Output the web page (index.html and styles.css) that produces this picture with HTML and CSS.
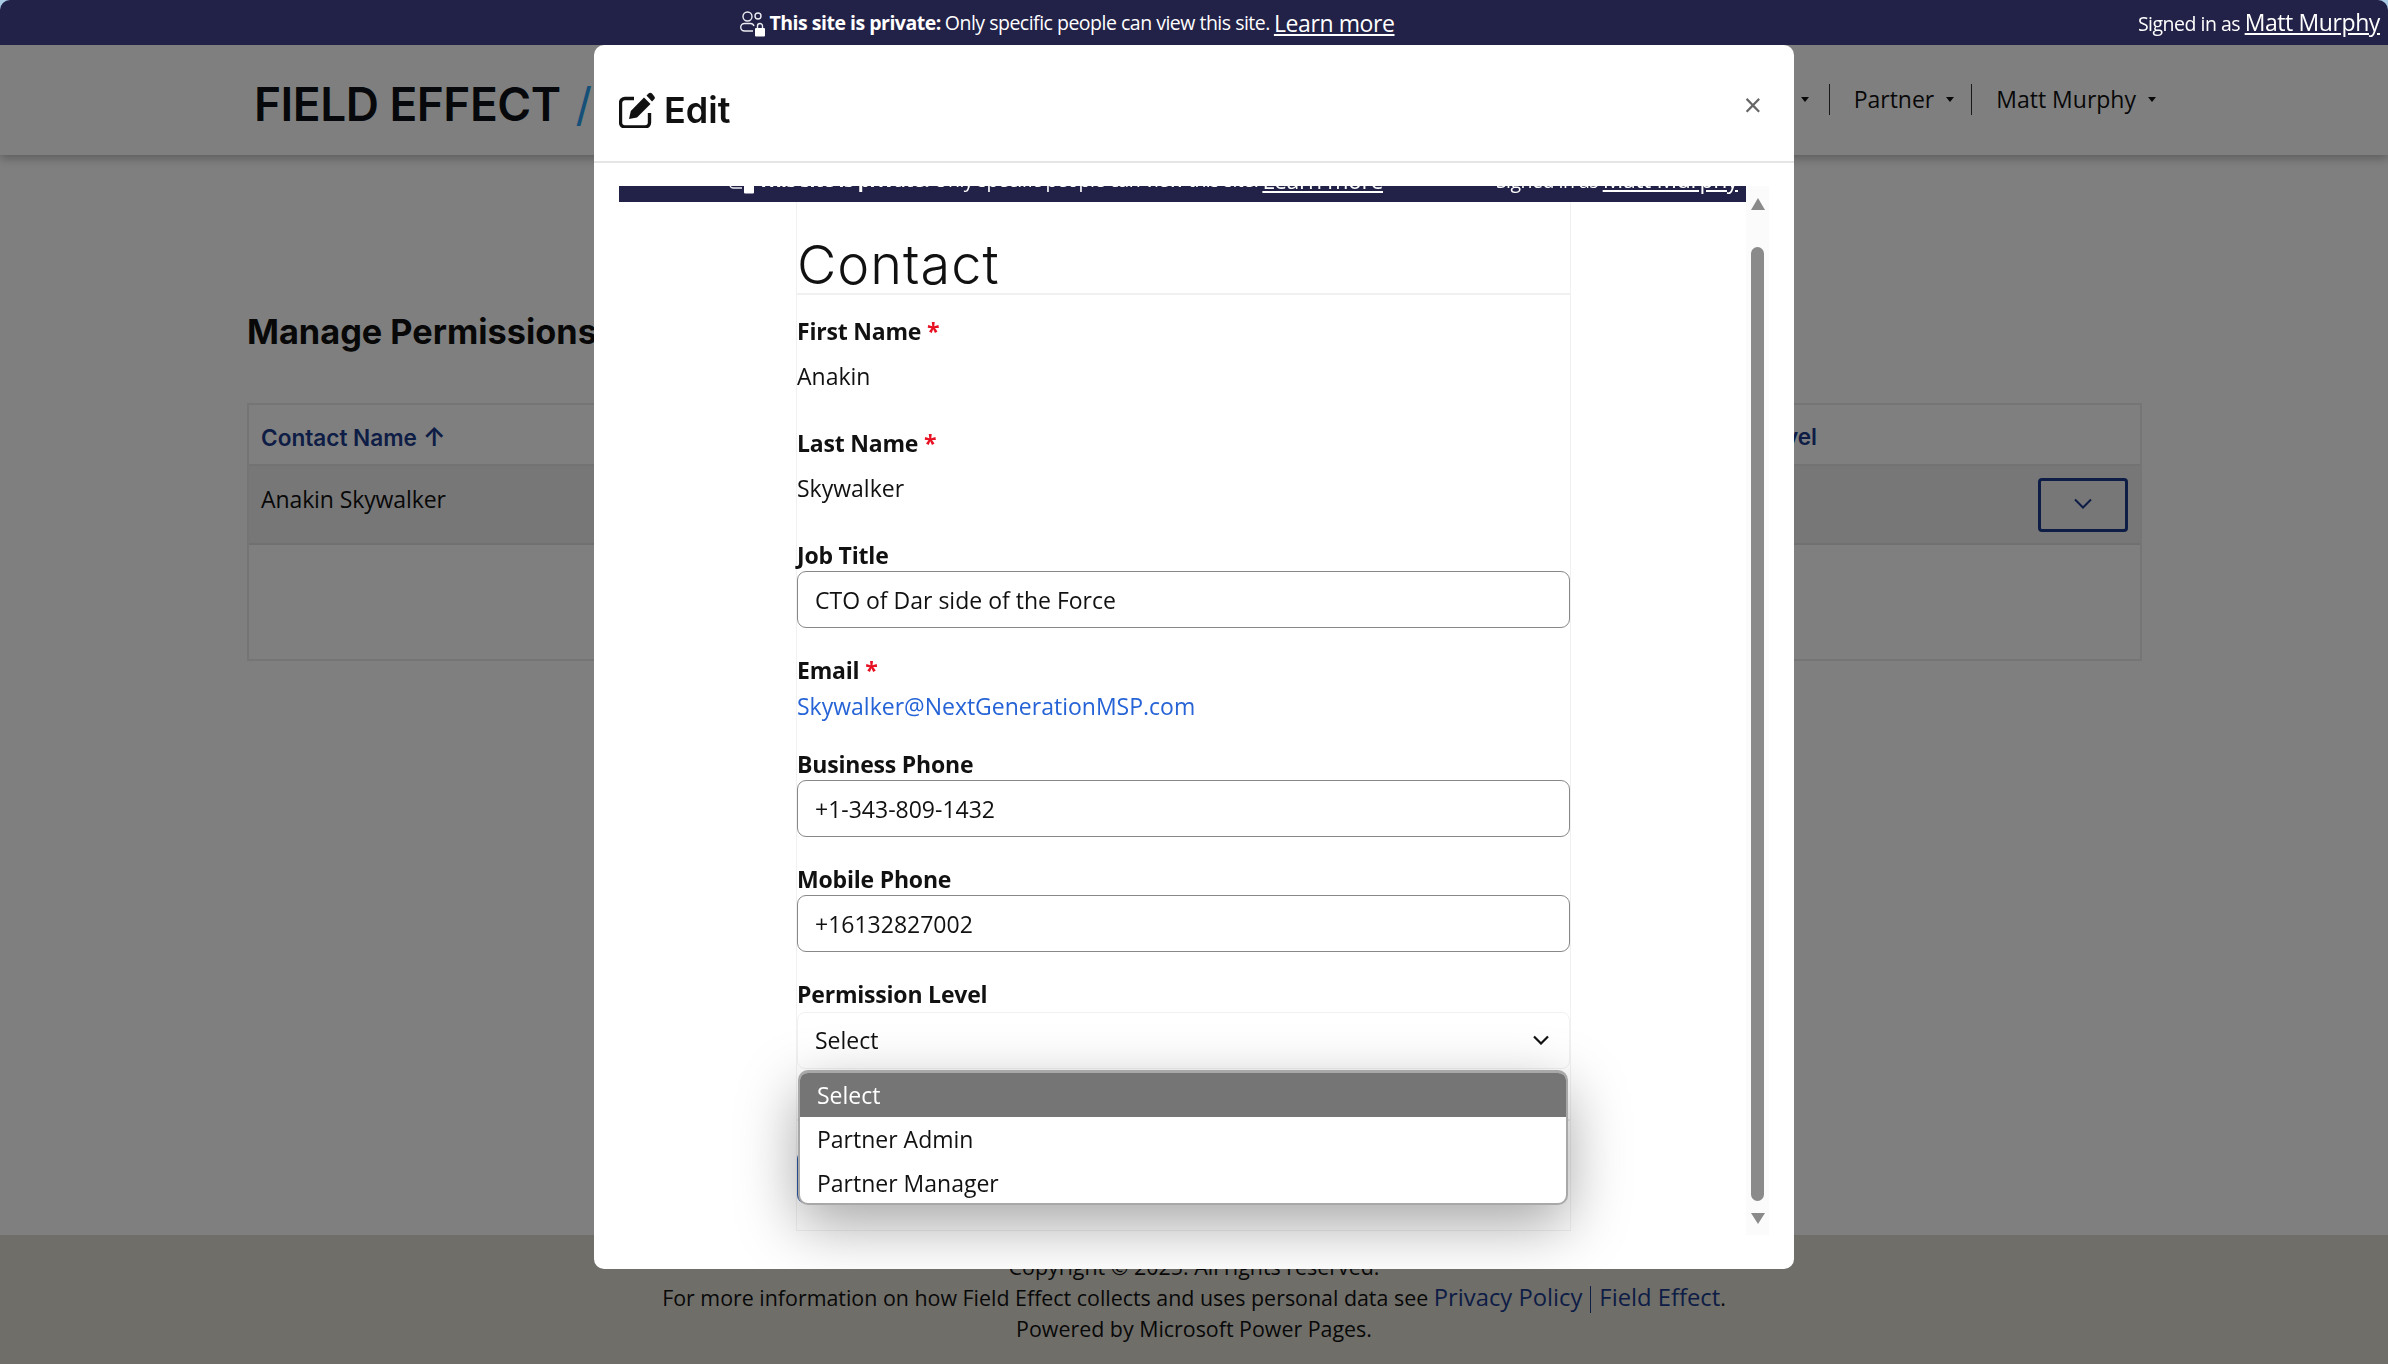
FILE: index.html
```html
<!DOCTYPE html>
<html lang="en">
<head>
    <meta charset="UTF-8">
    <meta name="viewport" content="width=device-width, initial-scale=1.0">
    <title>Manage Permissions</title>
    <link rel="stylesheet" href="styles.css">
</head>
<body>

<!-- Private site banner -->
<div class="site-banner">
    <div class="banner-note">
        <svg class="banner-icon" viewBox="0 0 26 28" fill="none" stroke="#ececf2" stroke-width="1.400">
            <circle cx="8.500" cy="7.500" r="4.500"/>
            <circle cx="19" cy="7" r="3"/>
            <path d="M14 22H5.500a3.700 3.700 0 0 1 0-7.500h6a3.700 3.700 0 0 1 3.500 2.500"/>
            <rect x="16" y="19" width="10" height="8.500" rx="1" fill="#fff" stroke="none"/>
            <path d="M18.500 19v-2a2.500 2.500 0 0 1 5 0v2"/>
        </svg>
        <strong>This site is private:</strong>
        <span>Only specific people can view this site.</span>
        <a href="#" class="banner-link">Learn more</a>
    </div>
    <div class="banner-user">Signed in as <a href="#" class="banner-link">Matt Murphy</a></div>
</div>

<div class="page">
    <!-- Site header -->
    <div class="site-header">
        <div class="logo">FIELD EFFECT <span class="logo-slash">/</span></div>
        <div class="nav">
            <div class="nav-item">Account <i class="caret"></i></div>
            <div class="nav-item nav-partner">Partner <i class="caret"></i></div>
            <div class="nav-item">Matt Murphy <i class="caret"></i></div>
        </div>
    </div>

    <div class="content">
        <h2 class="page-title">Manage Permissions</h2>
        <div class="list">
            <div class="list-row list-head">
                <div>Contact Name <span class="sort-arrow">&#8593;</span></div>
                <div class="list-head-level">Permission Level</div>
            </div>
            <div class="list-row list-item">
                <div class="list-name">Anakin Skywalker</div>
                <button class="row-button">
                    <svg viewBox="0 0 18 12" width="18" height="12" fill="none" stroke="#1a3a8a" stroke-width="2"><path d="M1 1.500l8 8 8-8"/></svg>
                </button>
            </div>
        </div>
    </div>

    <!-- Footer -->
    <div class="site-footer">
        <div>Copyright &copy; 2025. All rights reserved.</div>
        <div>For more information on how Field Effect collects and uses personal data see <a href="#">Privacy Policy</a><span class="footer-bar"></span><a href="#">Field Effect</a>.</div>
        <div>Powered by Microsoft Power Pages.</div>
    </div>
</div>

<!-- Edit modal -->
<div class="overlay">
    <div class="modal">
        <div class="modal-head">
            <div class="modal-title">
                <svg class="edit-icon" viewBox="0 0 36 36" fill="none">
                    <path d="M15 6.500H6a4.500 4.500 0 0 0-4.500 4.500v19.500a4.500 4.500 0 0 0 4.500 4.500h20a4.500 4.500 0 0 0 4.500-4.500V21" stroke="#111" stroke-width="3.400"/>
                    <path d="M10 27l1.800-8L25 5.500l6.500 6.500L18 25.500z" fill="#111"/>
                    <path d="M27.500 3.500l2-2a2.500 2.500 0 0 1 3.500 0l2 2.500a2.500 2.500 0 0 1 0 3.500l-2 2z" fill="#111"/>
                </svg>
                Edit
            </div>
            <div class="modal-close">&times;</div>
        </div>
        <div class="modal-body">
            <div class="frame">
                <div class="frame-banner">
                    <div class="site-banner inner-banner">
                        <div class="banner-note">
                            <svg class="banner-icon" viewBox="0 0 26 28" fill="none" stroke="#ececf2" stroke-width="1.400">
                                <path d="M14 22H5.500a3.700 3.700 0 0 1 0-7.500h6a3.700 3.700 0 0 1 3.500 2.500"/>
                                <rect x="16" y="19" width="10" height="8.500" rx="1" fill="#fff" stroke="none"/>
                            </svg>
                            <strong>This site is private:</strong>
                            <span>Only specific people can view this site.</span>
                            <a href="#" class="banner-link">Learn more</a>
                        </div>
                        <div class="banner-user">Signed in as <a href="#" class="banner-link">Matt Murphy</a></div>
                    </div>
                </div>
                <div class="form-box">
                    <h1 class="form-title">Contact</h1>

                    <div class="field">
                        <div class="field-label">First Name <span class="required">*</span></div>
                        <div class="field-value">Anakin</div>
                    </div>
                    <div class="field">
                        <div class="field-label">Last Name <span class="required">*</span></div>
                        <div class="field-value">Skywalker</div>
                    </div>
                    <div class="field">
                        <div class="field-label">Job Title</div>
                        <input class="field-input" type="text" value="CTO of Dar side of the Force">
                    </div>
                    <div class="field">
                        <div class="field-label">Email <span class="required">*</span></div>
                        <a href="#" class="field-link">Skywalker@NextGenerationMSP.com</a>
                    </div>
                    <div class="field">
                        <div class="field-label">Business Phone</div>
                        <input class="field-input" type="text" value="+1-343-809-1432">
                    </div>
                    <div class="field">
                        <div class="field-label">Mobile Phone</div>
                        <input class="field-input" type="text" value="+16132827002">
                    </div>
                    <div class="field">
                        <div class="field-label">Permission Level</div>
                        <div class="select-box">
                            <span>Select</span>
                            <svg viewBox="0 0 16 10" width="16" height="10" fill="none" stroke="#111" stroke-width="2.200"><path d="M1 1.500l7 7 7-7"/></svg>
                            <div class="select-menu">
                                <div class="select-option selected">Select</div>
                                <div class="select-option">Partner Admin</div>
                                <div class="select-option">Partner Manager</div>
                            </div>
                        </div>
                    </div>

                    <div class="form-actions">
                        <button class="submit-button">Submit</button>
                    </div>
                </div>
            </div>

            <div class="scroll-track">
                <div class="scroll-up"></div>
                <div class="scroll-thumb"></div>
                <div class="scroll-down"></div>
            </div>
        </div>
    </div>
</div>

</body>
</html>
```

FILE: styles.css
```css
* {
    box-sizing: border-box;
}

html {
    background-color: #a9cbe3;
}

body {
    margin: 0;
    height: 1364px;
    overflow: hidden;
    font-family: "Open Sans", "Noto Sans", sans-serif;
    font-size: 23px;
    color: #111;
}

a {
    color: #1a3a8a;
    text-decoration: none;
}

/* Private site banner */
.site-banner {
    position: relative;
    z-index: 10;
    display: flex;
    justify-content: center;
    align-items: center;
    height: 45px;
    padding: 0 254px 0 0;
    background-color: #222147;
    color: #fff;
    font-size: 19.500px;
    letter-spacing: -0.5px;
    border-radius: 10px 10px 0 0;
}

.banner-note {
    display: flex;
    align-items: center;
    gap: 4px;
}

.banner-icon {
    width: 26px;
    height: 28px;
}

.banner-link {
    color: #fff;
    font-size: 23px;
    letter-spacing: -0.4px;
    text-decoration: underline;
}

.banner-user {
    position: absolute;
    right: 8px;
    top: 0;
    line-height: 45px;
}

.page {
    display: flex;
    flex-direction: column;
    height: 1319px;
    background-color: #fff;
}

/* Site header */
.site-header {
    display: flex;
    justify-content: space-between;
    align-items: center;
    height: 110px;
    padding: 0 232px 0 254px;
    box-shadow: 0 3px 10px rgba(0, 0, 0, 0.3);
}

.logo {
    margin-top: 8px;
    font-family: Inter, sans-serif;
    font-size: 46px;
    font-weight: 600;
    letter-spacing: -0.5px;
    color: #0d1117;
}

.logo-slash {
    font-weight: 400;
    color: #2aa0f0;
    margin-left: 4px;
}

.nav {
    display: flex;
    align-items: center;
    margin-top: -2px;
}

.nav-item {
    display: flex;
    align-items: center;
    gap: 12px;
    height: 31px;
    padding: 0 20px 0 24px;
    border-left: 1px solid #333;
}

.nav-item:first-child {
    border-left: none;
}

.nav-item:last-child {
    padding-right: 0;
}

.nav-partner {
    padding-right: 17px;
}

.caret {
    width: 0;
    height: 0;
    border-left: 4px solid transparent;
    border-right: 4px solid transparent;
    border-top: 5px solid #111;
}

/* Table behind the modal */
.content {
    flex: 1;
    padding: 0 246px 0 247px;
}

.page-title {
    margin: 155px 0 49px;
    font-family: Inter, sans-serif;
    font-size: 34.300px;
    font-weight: 700;
    line-height: 44px;
}

.list {
    height: 258px;
    border: 2px solid #ebebeb;
}

.list-row {
    display: flex;
    justify-content: space-between;
    padding: 0 12px;
}

.list-head {
    align-items: center;
    height: 61px;
    padding-top: 3px;
    border-bottom: 2px solid #e6e6e6;
    font-family: Inter, sans-serif;
    font-size: 22.600px;
    font-weight: 600;
    color: #1a3a8a;
}

.sort-arrow {
    font-size: 26px;
}

.list-head-level {
    padding-right: 311px;
}

.list-item {
    height: 79px;
    background-color: #eee;
    border-bottom: 2px solid #e0e0e0;
}

.list-name {
    padding-top: 17px;
    letter-spacing: -0.1px;
}

.row-button {
    width: 90px;
    height: 54px;
    margin-top: 12px;
    background: none;
    border: 3px solid #1a3a8a;
    border-radius: 4px;
}

/* Footer */
.site-footer {
    height: 129px;
    padding-top: 16px;
    background-color: #dfddd3;
    text-align: center;
    font-size: 21.400px;
    line-height: 31px;
}

.site-footer a {
    font-size: 23.800px;
}

.footer-bar {
    display: inline-block;
    height: 27px;
    margin: 0 8px 0 8px;
    border-left: 1px solid #1a3a8a;
    vertical-align: -7px;
}

/* Modal */
.overlay {
    position: fixed;
    top: 45px;
    left: 0;
    right: 0;
    bottom: 0;
    z-index: 5;
    display: flex;
    justify-content: center;
    background-color: rgba(0, 0, 0, 0.5);
}

.modal {
    display: flex;
    flex-direction: column;
    width: 1200px;
    height: 1224px;
    overflow: hidden;
    background-color: #fff;
    border-radius: 10px;
}

.modal-head {
    display: flex;
    justify-content: space-between;
    align-items: center;
    flex-shrink: 0;
    height: 118px;
    padding: 14px 32px 0 25px;
    border-bottom: 2px solid #e5e5e5;
}

.modal-title {
    display: flex;
    align-items: center;
    gap: 9px;
    font-family: Inter, sans-serif;
    font-size: 36px;
    font-weight: 600;
}

.edit-icon {
    width: 36px;
    height: 36px;
}

.modal-close {
    margin-top: -10px;
    font-size: 32px;
    line-height: 1;
    color: #666;
}

.modal-body {
    display: flex;
    height: 1049px;
    margin-top: 23px;
    padding-left: 25px;
}

.frame {
    width: 1127px;
}

.frame-banner {
    height: 16px;
    overflow: hidden;
}

.inner-banner {
    z-index: 0;
    margin-top: -29px;
    border-radius: 0;
}

.form-box {
    width: 775px;
    height: 1029px;
    margin-left: 177px;
    border: 1px solid #f1f1f1;
    border-top: none;
}

.form-title {
    height: 93px;
    margin: 0 0 20px;
    padding-top: 33px;
    border-bottom: 2px solid #f0f0f0;
    font-family: Inter, sans-serif;
    font-size: 54px;
    font-weight: 300;
    letter-spacing: 1px;
    line-height: 60px;
}

.field {
    margin-bottom: 26px;
}

.field-label {
    font-weight: 700;
    line-height: 32px;
    letter-spacing: -0.2px;
}

.required {
    color: #e81123;
}

.field-value {
    margin: 13px 0 35px;
    line-height: 32px;
}

.field-input {
    display: block;
    width: 100%;
    height: 57px;
    padding: 0 17px;
    font-family: inherit;
    font-size: 23px;
    color: #111;
    border: 1px solid #888;
    border-radius: 9px;
}

.field-link {
    display: block;
    margin-top: 4px;
    line-height: 32px;
    color: #2563d6;
}

/* Open select with its popup */
.select-box {
    position: relative;
    display: flex;
    justify-content: space-between;
    align-items: center;
    height: 57px;
    margin-top: 2px;
    padding: 0 20px 2px 17px;
    border: 1px solid #f1f1f1;
    border-radius: 8px;
}

.select-menu {
    position: absolute;
    top: 57px;
    left: 0;
    right: 1px;
    z-index: 3;
    height: 135px;
    overflow: hidden;
    background-color: #fff;
    border: 2px solid #a8a8a8;
    border-top-width: 3px;
    border-radius: 10px;
    box-shadow: 0 20px 60px rgba(0, 0, 0, 0.35);
}

.select-option {
    height: 44px;
    padding: 0 17px;
    line-height: 44px;
}

.select-option.selected {
    background-color: #757575;
    color: #fff;
}

.form-actions {
    margin-top: 50px;
    padding-top: 30px;
    border-top: 2px solid #eee;
}

.submit-button {
    width: 140px;
    height: 52px;
    background-color: #2f5aa8;
    color: #fff;
    border: none;
    border-radius: 8px;
    font-family: inherit;
    font-size: 23px;
}

/* Scrollbar of the frame */
.scroll-track {
    display: flex;
    flex-direction: column;
    align-items: center;
    width: 23px;
    height: 1049px;
    padding-top: 12px;
    background-color: #fbfbfb;
}

.scroll-up {
    width: 0;
    height: 0;
    border-left: 7px solid transparent;
    border-right: 7px solid transparent;
    border-bottom: 12px solid #8a8a8a;
}

.scroll-thumb {
    width: 13px;
    height: 954px;
    margin: 37px 0 12px;
    background-color: #8a8a8a;
    border-radius: 7px;
}

.scroll-down {
    width: 0;
    height: 0;
    border-left: 7px solid transparent;
    border-right: 7px solid transparent;
    border-top: 11px solid #8a8a8a;
}
```
